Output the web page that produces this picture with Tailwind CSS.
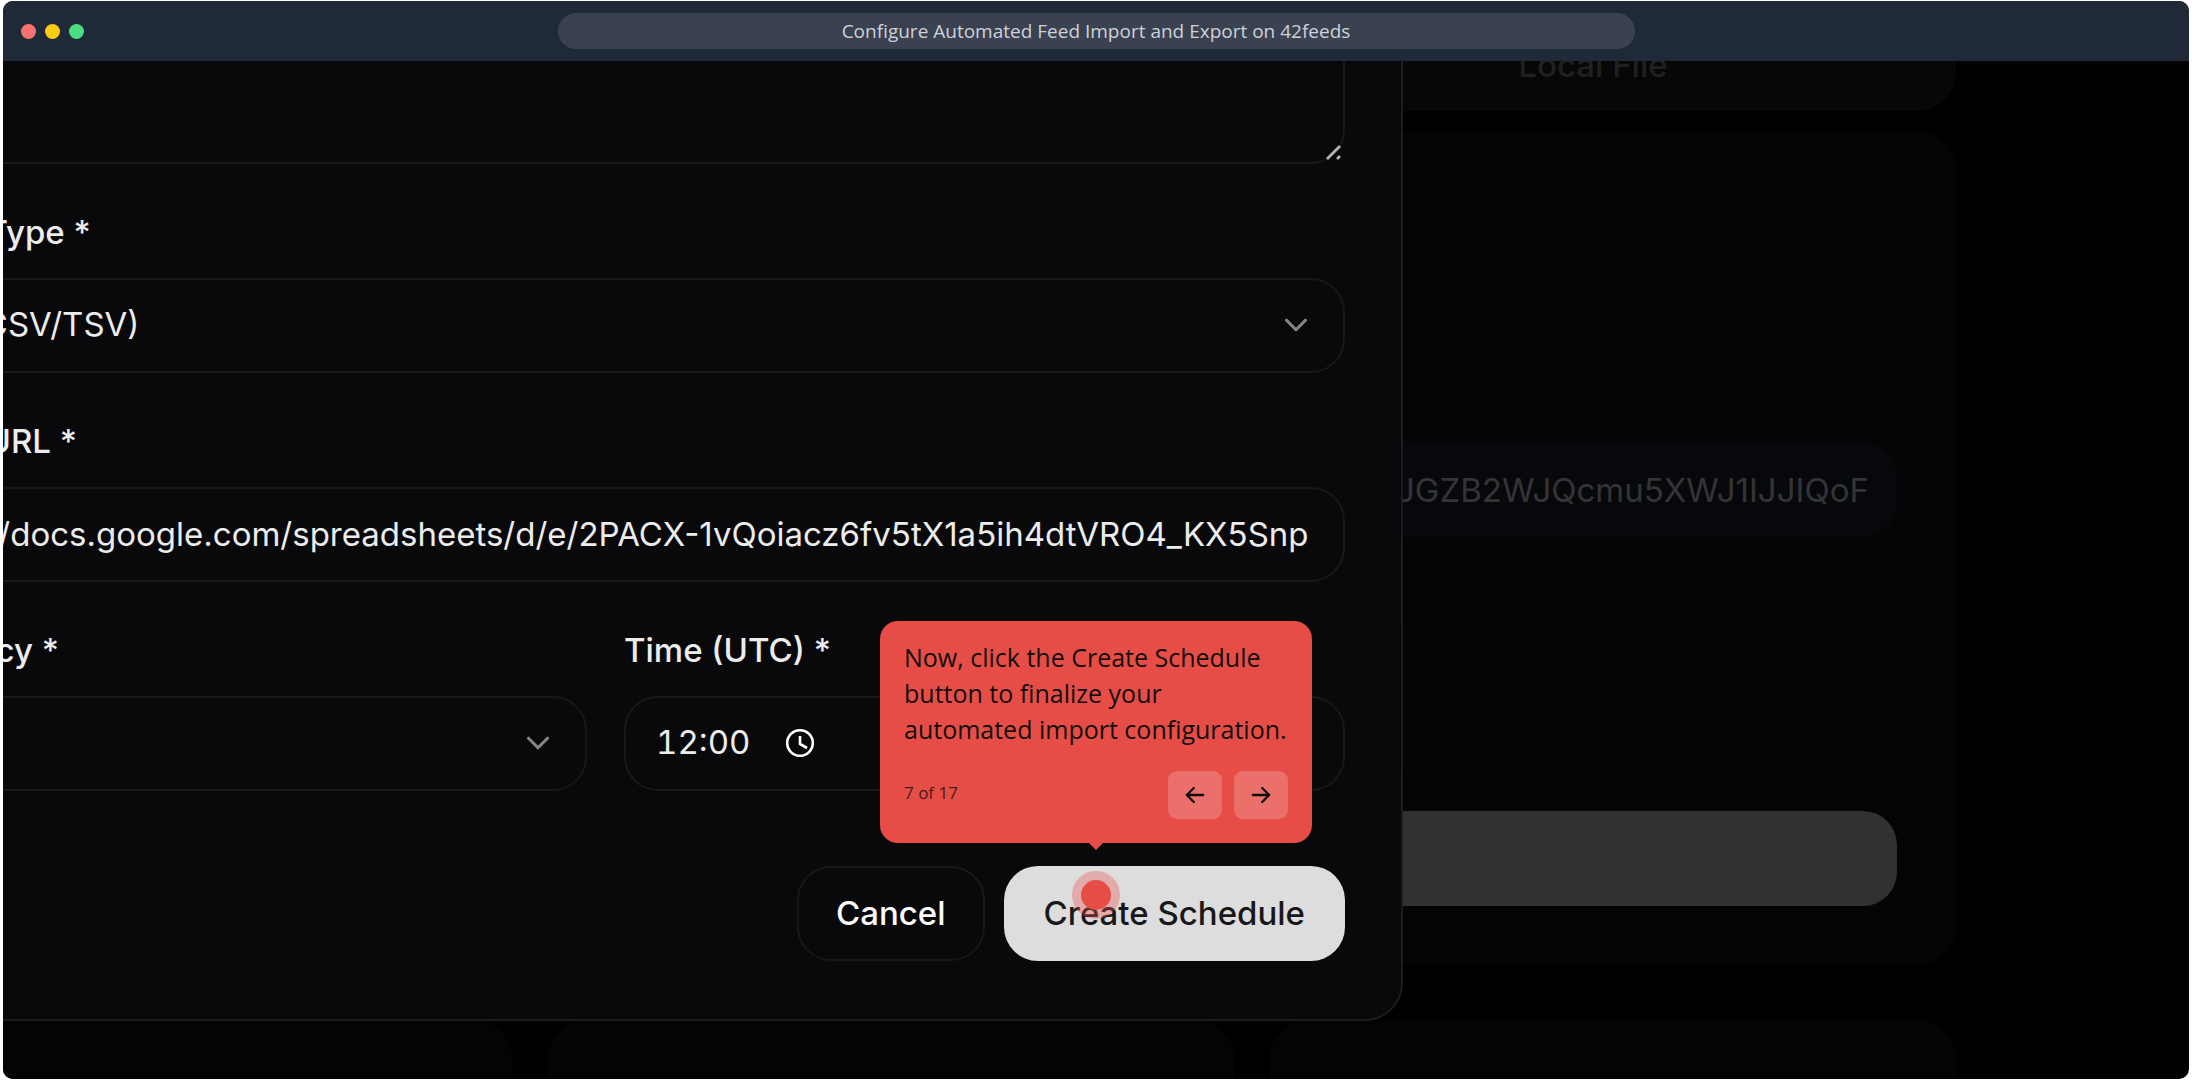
<!DOCTYPE html>
<html lang="en">

<head>
    <meta charset="UTF-8">
    <meta name="viewport" content="width=device-width, initial-scale=1.0">
    <script src="https://cdn.jsdelivr.net/npm/@tailwindcss/browser@4"></script>
    <title>Configure Automated Feed Import and Export on 42feeds</title>
</head>

<body class="bg-white h-screen overflow-hidden px-[3px] py-px font-['Inter',sans-serif]">
    <div class="h-full flex flex-col rounded-[10px] overflow-hidden bg-black">

        <!-- Window bar -->
        <header class="h-[60px] shrink-0 bg-[#202937] grid grid-cols-[1fr_2fr_1fr] items-center">
            <div class="flex gap-[9px] pl-[18px]">
                <span class="size-[15px] rounded-full bg-[#f87171]"></span>
                <span class="size-[15px] rounded-full bg-[#facc15]"></span>
                <span class="size-[15px] rounded-full bg-[#4ade80]"></span>
            </div>
            <div class="h-9 mx-2 rounded-[18px] bg-[#3a4150] text-[#ced2d8] text-[19px] leading-9 text-center font-['Open_Sans',sans-serif]">Configure Automated Feed Import and Export on 42feeds</div>
        </header>

        <div class="relative flex-1 overflow-hidden">

            <!-- Dimmed page -->
            <main class="-ml-[177px] mr-[233px] text-[33px]">
                <div class="-mt-3.5 grid grid-cols-3 px-3 pb-7 rounded-b-[38px] bg-[#070707]">
                    <button class="col-start-3 leading-9 font-medium text-[#202020]">Local File</button>
                </div>
                <section class="mt-5 px-[59px] pt-[311px] pb-[59px] rounded-[38px] bg-[#040404]">
                    <input type="text" aria-label="Feed URL" value="JGZB2WJQcmu5XWJ1IJJIQoFz" class="block ml-auto w-[550px] h-[95px] pl-[49px] pr-[30px] rounded-[34px] bg-[#07080c] text-[#343434]">
                    <div class="mt-[88px] h-[147px] rounded-[34px] bg-[#050505]"></div>
                    <button aria-label="Import" class="mt-[39px] block w-full h-[95px] rounded-[34px] bg-[#313131]"></button>
                </section>
                <div class="mt-[55px] grid grid-cols-3 gap-[36px]">
                    <div class="h-[200px] rounded-[38px] bg-[#040404]"></div>
                    <div class="h-[200px] rounded-[38px] bg-[#040404]"></div>
                    <div class="h-[200px] rounded-[38px] bg-[#040404]"></div>
                </div>
            </main>

            <!-- Schedule dialog -->
            <form class="absolute -left-[195px] bottom-[58px] w-[1595px] px-14 pb-[58px] border-2 border-[#1c1c1e] rounded-[38px] bg-[#09090b] text-[33px] text-[#ececec]">
                <div class="relative">
                    <textarea aria-label="Description" class="block w-full h-[190px] border-2 border-[#18181a] rounded-[34px] bg-transparent resize-none"></textarea>
                    <svg class="absolute right-[3px] bottom-1 size-4" viewBox="0 0 16 16" fill="none" stroke="#b4b4b4" stroke-width="2.8">
                        <path d="M1 15 14 2M11 15l3-3" />
                    </svg>
                </div>

                <div class="mt-[38px]">
                    <label for="type" class="block mb-4 leading-[60px] font-medium">Source Type *</label>
                    <div class="relative">
                        <select id="type" class="block w-full h-[95px] px-[30px] pb-0.5 border-2 border-[#18181a] rounded-[34px] bg-transparent appearance-none">
                            <option>URL (CSV/TSV)</option>
                        </select>
                        <svg class="absolute right-[30px] top-7 size-[38px] pointer-events-none" viewBox="0 0 24 24" fill="none" stroke="#858586" stroke-width="2" stroke-linecap="round" stroke-linejoin="round">
                            <path d="m6 9 6 6 6-6" />
                        </svg>
                    </div>
                </div>

                <div class="mt-[38px]">
                    <label for="url" class="block mb-4 leading-[60px] font-medium">Source URL *</label>
                    <input id="url" type="text" value="https://docs.google.com/spreadsheets/d/e/2PACX-1vQoiacz6fv5tX1a5ih4dtVRO4_KX5Snp" class="block w-full h-[95px] pl-[31px] pr-7 pb-0.5 border-2 border-[#18181a] rounded-[34px] bg-transparent">
                </div>

                <div class="mt-[38px] grid grid-cols-2 gap-[37px]">
                    <div>
                        <label for="freq" class="block mb-4 leading-[60px] font-medium">Frequency *</label>
                        <div class="relative">
                            <select id="freq" class="block w-full h-[95px] px-[30px] pb-0.5 border-2 border-[#18181a] rounded-[34px] bg-transparent appearance-none">
                                <option>Daily</option>
                            </select>
                            <svg class="absolute right-[30px] top-7 size-[38px] pointer-events-none" viewBox="0 0 24 24" fill="none" stroke="#858586" stroke-width="2" stroke-linecap="round" stroke-linejoin="round">
                                <path d="m6 9 6 6 6-6" />
                            </svg>
                        </div>
                    </div>
                    <div>
                        <label for="time" class="block mb-4 leading-[60px] font-medium">Time (UTC) *</label>
                        <div class="flex items-center gap-9 h-[95px] px-[30px] pb-0.5 border-2 border-[#18181a] rounded-[34px]">
                            <input id="time" type="text" value="12:00" class="w-[93px] bg-transparent tabular-nums">
                            <svg class="size-[30px]" viewBox="0 0 30 30" fill="none" stroke="#fff" stroke-width="2.6">
                                <circle cx="15" cy="15" r="12.8" />
                                <path d="M15 8v8l7 4" />
                            </svg>
                        </div>
                    </div>
                </div>

                <div class="mt-[75px] flex justify-end gap-[19px] font-medium">
                    <button type="button" class="h-[95px] px-[37px] border-2 border-[#18181a] rounded-[34px] text-[#fafafa]">Cancel</button>
                    <button type="button" class="h-[95px] px-10 rounded-[34px] bg-[#dddddd] text-[#18181b]">Create Schedule</button>
                </div>
            </form>

            <!-- Click marker -->
            <div class="absolute left-1/2 top-[810px] -translate-x-1/2 size-12 rounded-full bg-[#e74d47]/35 flex items-center justify-center">
                <span class="size-[30px] rounded-full bg-[#e74d47]"></span>
            </div>

            <!-- Step tooltip -->
            <div class="absolute left-1/2 top-[560px] -translate-x-1/2 w-[432px] px-6 pt-[18px] pb-6 rounded-[18px] bg-[#e74d47] text-[#120d0d] font-['Open_Sans',sans-serif]">
                <p class="text-[25px] leading-9 whitespace-nowrap">Now, click the Create Schedule<br>button to finalize your<br>automated import configuration.</p>
                <div class="mt-6 flex items-center gap-3">
                    <span class="mr-auto pb-1 text-[17px] text-[#120d0d]/80">7 of 17</span>
                    <button type="button" aria-label="Previous" class="w-[54px] h-12 rounded-[9px] bg-white/20 flex items-center justify-center">
                        <svg class="size-7" viewBox="0 0 24 24" fill="none" stroke="currentColor" stroke-width="2" stroke-linecap="round" stroke-linejoin="round">
                            <path d="M19 12H5m6-6-6 6 6 6" />
                        </svg>
                    </button>
                    <button type="button" aria-label="Next" class="w-[54px] h-12 rounded-[9px] bg-white/20 flex items-center justify-center">
                        <svg class="size-7" viewBox="0 0 24 24" fill="none" stroke="currentColor" stroke-width="2" stroke-linecap="round" stroke-linejoin="round">
                            <path d="M5 12h14m-6-6 6 6-6 6" />
                        </svg>
                    </button>
                </div>
                <svg class="absolute left-1/2 top-full -translate-x-1/2 w-[14px] h-[7px]" viewBox="0 0 14 7" fill="#e74d47">
                    <path d="M0 0h14L7 7z" />
                </svg>
            </div>
        </div>
    </div>
</body>

</html>
